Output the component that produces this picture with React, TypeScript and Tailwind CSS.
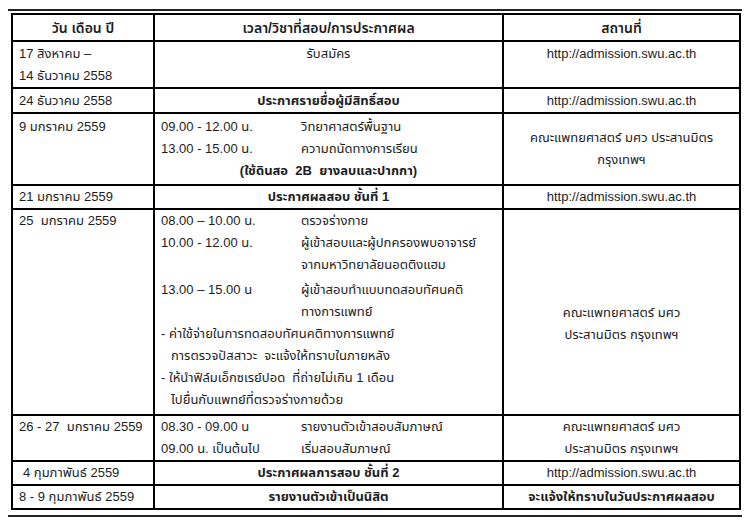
import React from 'react'

const font = { fontFamily: "'Liberation Sans', 'Noto Sans Thai', 'Noto Sans', sans-serif" }

const URL = 'http://admission.swu.ac.th'

// base cell; vertical alignment is added per cell
const cell = 'border-2 border-black px-[6px] text-[13px] leading-[22px] text-[#1d1d1d]'
const top = `${cell} align-top`
const mid = `${cell} align-middle`

const TimeRow = ({ time, text, extra }: { time: string; text: string; extra?: string }) => (
  <div className="grid grid-cols-[140px_1fr]">
    <span>{time}</span>
    <span>
      {text}
      {extra && <span className="block">{extra}</span>}
    </span>
  </div>
)

export default function App() {
  return (
    <div className="w-[750px] h-[527px] bg-white overflow-hidden" style={font}>
      <div className="pt-[9px] pl-[8px] pr-[8px]">
        {/* Top rule */}
        <div className="h-[2px] bg-[#222]" />
        <div className="pt-[2px] pl-[3px] pr-[2px]">
          <table className="table-fixed border-collapse w-[728px]">
            <colgroup>
              <col className="w-[142px]" />
              <col className="w-[349px]" />
              <col className="w-[237px]" />
            </colgroup>
            <tbody>
              <tr className="h-[27px]">
                <th className={`${mid} font-semibold text-center text-[14px]`}>วัน เดือน ปี</th>
                <th className={`${mid} font-semibold text-center text-[14px]`}>เวลา/วิชาที่สอบ/การประกาศผล</th>
                <th className={`${mid} font-semibold text-center text-[14px]`}>สถานที่</th>
              </tr>

              <tr className="h-[47px]">
                <td className={`${top} pt-[1px]`}>
                  17 สิงหาคม –
                  <br />
                  14 ธันวาคม 2558
                </td>
                <td className={`${top} pt-[1px] text-center`}>รับสมัคร</td>
                <td className={`${top} pt-[1px] text-center`}>{URL}</td>
              </tr>

              <tr className="h-[25px]">
                <td className={mid}>24 ธันวาคม 2558</td>
                <td className={`${mid} text-center font-bold`}>ประกาศรายชื่อผู้มีสิทธิ์สอบ</td>
                <td className={`${mid} text-center`}>{URL}</td>
              </tr>

              <tr className="h-[72px]">
                <td className={`${top} pt-[2px]`}>9 มกราคม 2559</td>
                <td className={`${top} pt-[2px]`}>
                  <TimeRow time="09.00 - 12.00 น." text="วิทยาศาสตร์พื้นฐาน" />
                  <TimeRow time="13.00 - 15.00 น." text="ความถนัดทางการเรียน" />
                  <div className="text-center font-bold">(ใช้ดินสอ&nbsp; 2B&nbsp; ยางลบและปากกา)</div>
                </td>
                <td className={`${mid} text-center`}>
                  คณะแพทยศาสตร์ มศว ประสานมิตร
                  <br />
                  กรุงเทพฯ
                </td>
              </tr>

              <tr className="h-[23px]">
                <td className={mid}>21 มกราคม 2559</td>
                <td className={`${mid} text-center font-bold`}>ประกาศผลสอบ ชั้นที่ 1</td>
                <td className={`${mid} text-center`}>{URL}</td>
              </tr>

              <tr className="h-[206px]">
                <td className={top}>25&nbsp; มกราคม 2559</td>
                <td className={top}>
                  <TimeRow time="08.00 – 10.00 น." text="ตรวจร่างกาย" />
                  <TimeRow time="10.00 - 12.00 น." text="ผู้เข้าสอบและผู้ปกครองพบอาจารย์" extra="จากมหาวิทยาลัยนอตติงแฮม" />
                  <div className="pt-[3px]">
                    <TimeRow time="13.00 – 15.00 น" text="ผู้เข้าสอบทำแบบทดสอบทัศนคติ" extra="ทางการแพทย์" />
                  </div>
                  <div>- ค่าใช้จ่ายในการทดสอบทัศนคติทางการแพทย์</div>
                  <div className="pl-[10px]">การตรวจปัสสาวะ&nbsp; จะแจ้งให้ทราบในภายหลัง</div>
                  <div>- ให้นำฟิล์มเอ็กซเรย์ปอด&nbsp; ที่ถ่ายไม่เกิน 1 เดือน</div>
                  <div className="pl-[10px]">ไปยื่นกับแพทย์ที่ตรวจร่างกายด้วย</div>
                </td>
                <td className={`${top} text-center pt-[92px]`}>
                  คณะแพทยศาสตร์ มศว
                  <br />
                  ประสานมิตร กรุงเทพฯ
                </td>
              </tr>

              <tr className="h-[45px]">
                <td className={top}>26 - 27&nbsp; มกราคม 2559</td>
                <td className={top}>
                  <TimeRow time="08.30 - 09.00 น" text="รายงานตัวเข้าสอบสัมภาษณ์" />
                  <TimeRow time="09.00 น. เป็นต้นไป" text="เริ่มสอบสัมภาษณ์" />
                </td>
                <td className={`${top} text-center`}>
                  คณะแพทยศาสตร์ มศว
                  <br />
                  ประสานมิตร กรุงเทพฯ
                </td>
              </tr>

              <tr className="h-[22px]">
                <td className={`${mid} pl-[10px]`}>4 กุมภาพันธ์ 2559</td>
                <td className={`${mid} text-center font-bold`}>ประกาศผลการสอบ ชั้นที่ 2</td>
                <td className={`${mid} text-center`}>{URL}</td>
              </tr>

              <tr className="h-[23px]">
                <td className={mid}>8 - 9 กุมภาพันธ์ 2559</td>
                <td className={`${mid} text-center font-bold`}>รายงานตัวเข้าเป็นนิสิต</td>
                <td className={`${mid} text-center font-bold`}>จะแจ้งให้ทราบในวันประกาศผลสอบ</td>
              </tr>
            </tbody>
          </table>
        </div>
        {/* Bottom rule */}
        <div className="mt-[5px] h-[2px] bg-[#222]" />
      </div>
    </div>
  )
}
